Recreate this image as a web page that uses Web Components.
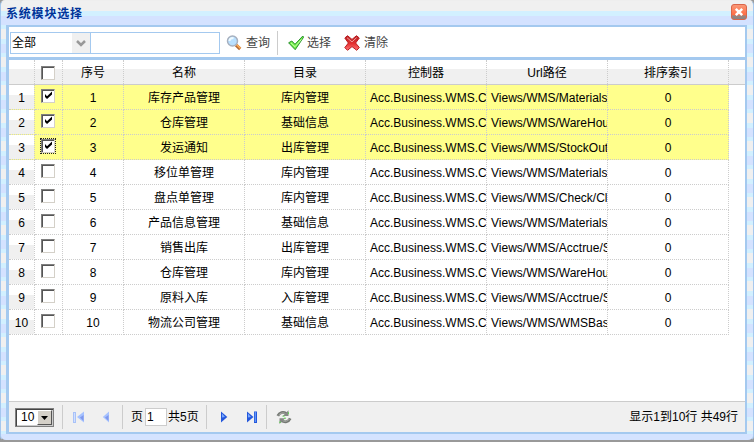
<!DOCTYPE html>
<html lang="zh"><head><meta charset="utf-8"><title>系统模块选择</title>
<style>
html,body{margin:0;width:754px;height:442px;overflow:hidden;background:#999}
body{font:12px/16px "Liberation Sans","Noto Sans CJK SC",sans-serif;color:#000}
</style></head><body>
<module-window heading="系统模块选择"><module-toolbar slot="tools"></module-toolbar><module-grid></module-grid><module-pager slot="footer"></module-pager></module-window>
<script>
const define=(name,fn)=>customElements.define(name,class extends HTMLElement{
  connectedCallback(){ if(!this.shadowRoot) this.attachShadow({mode:'open'}).innerHTML='<style>*{box-sizing:border-box}:host{box-sizing:border-box}</style>'+fn(this); }
});

define('ui-icon',el=>{
  const icons={
    close:'<defs><linearGradient id="g" x2="0" y2="1"><stop stop-color="#f99a7a"/><stop offset=".7" stop-color="#ff6c43"/><stop offset=".75" stop-color="#9a8580"/><stop offset="1" stop-color="#858585"/></linearGradient></defs><rect x=".5" y=".5" width="15" height="15" rx="2.5" fill="url(#g)" stroke="#d9654a"/><path d="M4.8 4.8l6.4 6.4m0-6.4l-6.4 6.4" stroke="#fff" stroke-width="2.5"/>',
    search:'<path d="M10 10l4.2 4" stroke="#b46a35" stroke-width="3.2"/><path d="M10.5 9.5l4 4" stroke="#ffae57" stroke-width="1.6"/><circle cx="6.5" cy="6" r="5" fill="#b9e0ff" stroke="#a7b0bf" stroke-width="1.5"/><path d="M3.5 6q0-3 4-3" stroke="#effaff" stroke-width="2" fill="none"/>',
    ok:'<path d="M.6 7.8L3.8 6 7 9.3 14.8 1l.8 1.2L7.2 14.7z" fill="#73ef48" stroke="#2a9130"/><path d="M3 7.9l4 3.8 6.5-7.2" fill="none" stroke="#c5ffad"/>',
    clear:'<defs><linearGradient id="r" x2="0" y2="1"><stop stop-color="#b32327"/><stop offset=".55" stop-color="#e53131"/><stop offset="1" stop-color="#ff7779"/></linearGradient></defs><path d="M.8 3L3.5.7 8 4.4 12.5.7 15.3 3 11.6 8l3.7 4.5-2.5 2.8L8 11.6l-4.5 3.7L.8 12.6 4.4 8z" fill="url(#r)" stroke="#bc191c" stroke-linejoin="round"/><path d="M3 2.7l5 4.2 4.6-4.3" fill="none" stroke="#f29b99"/>',
    first:'<path d="M2.5 3v11" stroke="#a9c2f8" stroke-width="3"/><path d="M2.5 4v9" stroke="#d0e0ff"/><path d="M12 2.5v11L5 8z" fill="#a6c2ff"/><path d="M11.5 6v6L8 8.5z" fill="#8098ec"/>',
    prev:'<path d="M11 2.5v11L4.8 8z" fill="#a6c2ff"/><path d="M10.5 6v6L7 8.5z" fill="#8098ec"/>',
    next:'<path d="M5 2.5v11L11.3 8z" fill="#2457db"/><path d="M6 4.5v4L9 8z" fill="#79a9ff"/>',
    last:'<path d="M3 2.5v11L9.5 8z" fill="#2457db"/><path d="M4 4.5v4L7 8z" fill="#79a9ff"/><path d="M11.5 2.5v11.5" stroke="#2457db" stroke-width="3"/><path d="M11.3 3v10" stroke="#6fa5ff"/>',
    refresh:'<path d="M1.8 6.8C3.5 3.2 7 2.6 10.5 4.4M14.2 9.4c-1.7 3.6-5.2 4.2-8.7 2.4" fill="none" stroke="#747873" stroke-width="2.8"/><path d="M2.5 6.3C4.5 3.6 7.5 3.3 10.5 5M13.5 9.9c-2 2.7-5 3-8 1.3" fill="none" stroke="#adb0ab"/><path d="M12.5 1.2V7H6.8zM3.5 15V9.2h5.7z" fill="#858985"/><path d="M6.5 7.2h2m4-4v2M8 9.2h2m-7 4h2" stroke="#60d654"/>'
  };
  return `<style>:host{display:block;width:16px;height:16px;flex:none}svg{display:block}</style><svg width="16" height="16" viewBox="0 0 16 16">${icons[el.getAttribute('name')]}</svg>`;
});

define('grid-check',el=>`<style>:host{display:block;width:14px;height:14px;background:#fff;border:1px solid;border-color:#808080 #d4d0c8 #d4d0c8 #808080;box-shadow:inset 1px 1px #555}svg{display:block}:host([focus]){outline:1px dotted #222}</style>${el.hasAttribute('checked')?'<svg width="12" height="12"><path d="M3 4v3l2 2 5-4.5v-3L5 6.2z" fill="#000"/></svg>':''}`);

define('module-window',el=>`<style>
:host{display:flex;flex-direction:column;width:754px;height:442px;padding:0 6px 6px 5px;border:1px solid #a4c7ee;border-top-color:#eee;border-bottom:2px solid #999;border-radius:5px 5px 6px 6px;overflow:hidden;
background:linear-gradient(#d4e3ff,#d4e3ff) bottom/100% 6px no-repeat,repeating-linear-gradient(#f0f0f0 0 10px,#d2f0ff 10px 15px,#d4e2ff 15px 24px,#d2f0ff 24px 28px)}
header{height:24px;flex:none;display:flex;justify-content:space-between;padding:3px 0 0;color:#003399;font-weight:bold;letter-spacing:.8px}
header span{line-height:21px}
main{flex:1;min-height:0;background:#fff;border:2px solid #a4c9ef;border-left-width:3px;display:flex;flex-direction:column}
.grid{flex:1;min-height:0}</style>
<header><span>${el.getAttribute('heading')}</span><ui-icon name="close"></ui-icon></header><main><slot name="tools"></slot><div class="grid"><slot></slot></div><slot name="footer"></slot></main>`);

define('module-toolbar',()=>`<style>
:host{display:flex;align-items:center;height:33px;border-bottom:3px solid #a4c9ef;color:#444;padding:1px 1px 0;flex:none}
.combo{width:81px;height:22px;border:1px solid #a4c9ef;display:flex;color:#000;line-height:20px;padding-left:1px}
.arrow{width:18px;margin-left:auto;background:#f0f0f0;display:flex;align-items:center;justify-content:center}
.input{width:130px;height:22px;border:1px solid #a4c9ef;margin-left:-1px}
ui-icon{margin-left:6px}span{margin-left:4px}i{width:1px;height:24px;background:#ccc;margin-left:7px}i+ui-icon{margin-left:10px}span.near{margin-left:3px}.clear{margin-left:13px}
</style><div class="combo">全部<div class="arrow"><svg width="10" height="8"><path d="M1 2l4 4 4-4" fill="none" stroke="#999" stroke-width="2.5"/></svg></div></div><div class="input"></div><ui-icon name="search"></ui-icon><span>查询</span><i></i><ui-icon name="ok"></ui-icon><span class="near">选择</span><ui-icon name="clear" class="clear"></ui-icon><span>清除</span>`);

define('module-grid',()=>{
 const ms=['库存产品管理','仓库管理','发运通知','移位单管理','盘点单管理','产品信息管理','销售出库','仓库管理','原料入库','物流公司管理'];
 const dirs=['库内管理','基础信息','出库管理','库内管理','库内管理','基础信息','出库管理','库内管理','入库管理','基础信息'];
 const urls=['Materials','WareHou','StockOut','Materials','Check/Cl','Materials','Acctrue/S','WareHou','Acctrue/S','WMSBas'];
 const rows=ms.map((m,i)=>
  `<div class="row ${i<3?'on':''}"><div class="no">${i+1}</div><div><grid-check ${i<3?'checked':''} ${i==2?'focus':''}></grid-check></div><div>${i+1}</div><div>${m}</div><div>${dirs[i]}</div><div class="path">Acc.Business.WMS.C</div><div class="path">Views/WMS/${urls[i]}</div><div>0</div></div>`
 ).join('');
 return `<style>:host{display:block}
.row{display:grid;grid-template-columns:26px 28px 61px 121px 121px 121px 121px 121px;width:720px;height:25px}
.row>div{border-right:1px dotted #ccc;border-bottom:1px dotted #ccc;display:flex;align-items:center;justify-content:center;min-width:0;overflow:hidden;white-space:nowrap;line-height:18px;padding-top:1px}
.row grid-check{margin:-4px 1px 0 0}.on{background:#ffff8c}.row .no{background:linear-gradient(#fff 40%,#f0f0f0 40%);background-clip:padding-box}
.row>.path{justify-content:flex-start;padding-left:4px}
.row>div:nth-child(2){overflow:visible}
.head{width:100%;background:linear-gradient(#fff 9px,#f0f0f0 9px);border-bottom:1px solid #ccc}.head>div{border-bottom:0}.head grid-check{margin-top:0}
</style><div class="row head"><div></div><div><grid-check></grid-check></div><div>序号</div><div>名称</div><div>目录</div><div>控制器</div><div>Url路径</div><div>排序索引</div></div>${rows}`;
});

define('module-pager',()=>`<style>
:host{display:flex;align-items:center;height:31px;background:#f0f0f0;border-top:1px solid #ccc;padding:0 7px 0 6px;flex:none}
.select{width:39px;height:19px;border:1px solid #808080;box-shadow:inset 1px 1px #444,inset -1px -1px #ccc;background:#fff;display:flex;line-height:17px;padding-left:5px}
.arrow{width:15px;height:15px;background:#d4d0c8;border:1px solid;border-color:#fff #555 #555 #fff;margin:1px 1px 0 auto;padding:5px 3px}
i{width:1px;height:24px;background:#ccc}.select+i{margin-left:8px}
.page{width:22px;height:18px;border:1px solid #ccc;background:#fff;padding-left:1px;line-height:16px;margin:0 1px 0 3px}
.info{margin-left:auto}
</style><div class="select">10<div class="arrow"><svg style="display:block" width="7" height="4"><path d="M0 0h7L3.5 4z"/></svg></div></div><i></i><ui-icon name="first" style="margin-left:9px"></ui-icon><ui-icon name="prev" style="margin-left:10px"></ui-icon><i style="margin-left:8px"></i><span style="margin-left:8px">页</span><div class="page" style="margin-left:2px">1</div><span>共5页</span><i style="margin-left:7px"></i><ui-icon name="next" style="margin-left:9px"></ui-icon><ui-icon name="last" style="margin-left:12px"></ui-icon><i style="margin-left:6px"></i><ui-icon name="refresh" style="margin-left:9px"></ui-icon><span class="info">显示1到10行 共49行</span>`);
</script></body></html>
